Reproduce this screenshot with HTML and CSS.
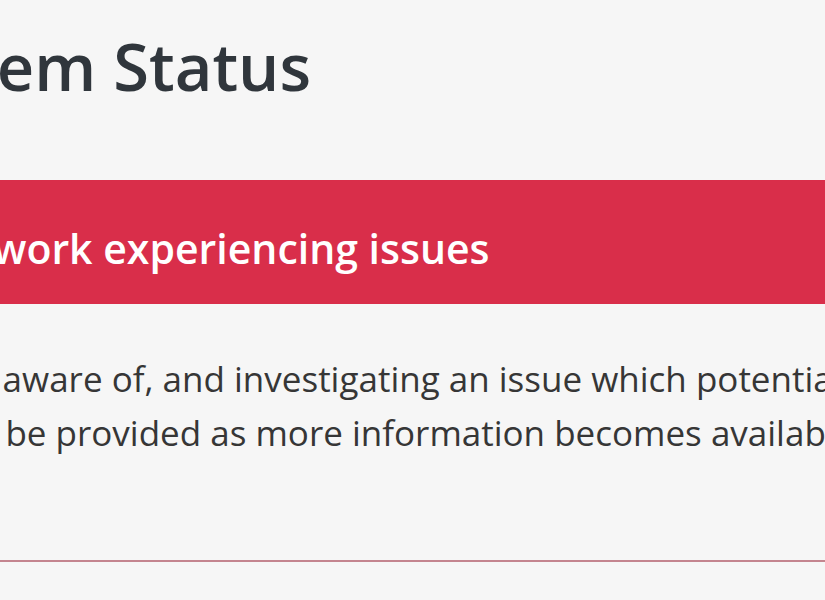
FILE: index.html
```html
<!DOCTYPE html>
<html lang="en">
<head>
<meta charset="utf-8">
<title>System Status</title>
<link rel="stylesheet" href="styles.css">
</head>
<body>
<main class="page">
  <h1 class="title">System Status</h1>
  <section class="card">
    <div class="banner">
      <h2 class="banner-title">Network experiencing issues</h2>
    </div>
    <div class="card-body">
      <p class="message">We are aware of, and investigating an issue which potentially affects some services.<br>Updates will be provided as more information becomes available.</p>
    </div>
  </section>
</main>
</body>
</html>
```

FILE: styles.css
```css
html, body {
  margin: 0;
  padding: 0;
}
body {
  background: #f6f6f6;
  overflow: hidden;
  width: 825px;
  height: 600px;
  font-family: "Open Sans", "Noto Sans", sans-serif;
  color: #333;
}
.page {
  display: flex;
  flex-direction: column;
}
.title {
  margin: 23px 0 0 -131px;
  font-size: 65px;
  line-height: 86px;
  font-weight: 600;
  color: #30363c;
  white-space: nowrap;
}
.card {
  margin-top: 71px;
  border-bottom: 2px solid #c4858f;
}
.banner {
  background: #d92e4a;
  height: 124px;
  box-sizing: border-box;
  padding-top: 43px;
}
.banner-title {
  margin: 0 0 0 -79px;
  font-size: 41px;
  line-height: 50px;
  font-weight: 600;
  color: #fff;
  white-space: nowrap;
}
.card-body {
  padding: 48px 0 100px;
}
.message {
  margin: 0 0 0 -203px;
  text-indent: 82px;
  font-size: 35px;
  line-height: 54px;
  color: #363636;
  white-space: nowrap;
}
```
